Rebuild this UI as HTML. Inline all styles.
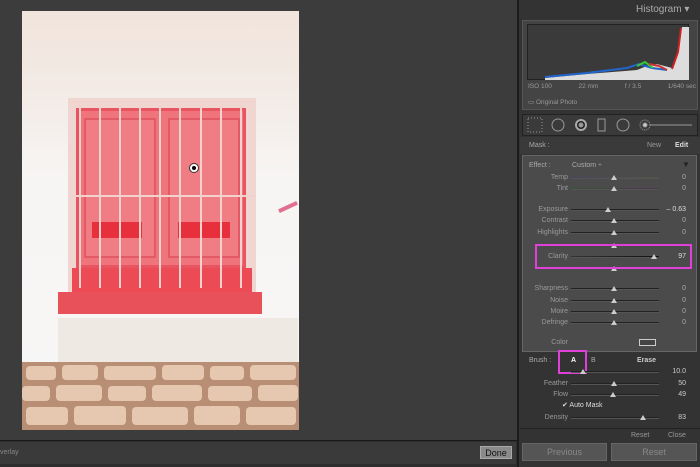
<!DOCTYPE html>
<html><head><style>
*{margin:0;padding:0;box-sizing:border-box}
body{width:700px;height:467px;background:#3d3d3d;position:relative;overflow:hidden;font-family:"Liberation Sans",sans-serif;font-size:7px;color:#aaa}
.a{position:absolute}
.lbl{position:absolute;right:132px;text-align:right;color:#999;font-size:7px}
.tr{position:absolute;left:571px;width:88px;height:2px;background:#222;border-bottom:1px solid #555}
.th{position:absolute;width:0;height:0;border-left:3px solid transparent;border-right:3px solid transparent;border-bottom:5px solid #ccc}
.v{position:absolute;right:14px;color:#aaa;font-size:7px}
</style></head><body>
<div class="a" style="left:0;top:0;width:518px;height:440px;background:#3c3c3c"></div>
<div class="a" style="left:22px;top:11px;width:277px;height:419px;background:linear-gradient(#f1e4dc 0,#f3ebe6 20%,#f7f5f4 40%,#f7f6f6 100%)"></div>
<div class="a" style="left:58px;top:318px;width:240px;height:45px;background:#efe9e3"></div>
<div class="a" style="left:68px;top:98px;width:188px;height:200px;background:#f0d6d0"></div>
<div class="a" style="left:76px;top:108px;width:170px;height:160px;background:#f0747c;border:3px solid #e85560"></div>
<div class="a" style="left:84px;top:118px;width:72px;height:140px;border:2px solid #e45a64;background:#f07d84"></div>
<div class="a" style="left:168px;top:118px;width:72px;height:140px;border:2px solid #e45a64;background:#f07d84"></div>
<div class="a" style="left:92px;top:222px;width:50px;height:16px;background:#e8303c"></div>
<div class="a" style="left:178px;top:222px;width:52px;height:16px;background:#e8303c"></div>
<div class="a" style="left:72px;top:268px;width:180px;height:24px;background:#ec4a55"></div>
<div class="a" style="left:58px;top:292px;width:204px;height:22px;background:#e8505a"></div>
<svg class="a" style="left:68px;top:98px" width="190" height="200">
<g stroke="#f2d2cc" stroke-width="2">
<line x1="12" y1="4" x2="12" y2="190"/><line x1="32" y1="4" x2="32" y2="190"/><line x1="52" y1="4" x2="52" y2="190"/><line x1="72" y1="4" x2="72" y2="190"/><line x1="92" y1="4" x2="92" y2="190"/><line x1="112" y1="4" x2="112" y2="190"/><line x1="133" y1="4" x2="133" y2="190"/><line x1="153" y1="4" x2="153" y2="190"/><line x1="173" y1="4" x2="173" y2="190"/>
<line x1="0" y1="4" x2="188" y2="4"/><line x1="0" y1="98" x2="188" y2="98"/>
</g></svg>
<div class="a" style="left:189px;top:163px;width:10px;height:10px;border-radius:50%;background:#fff;border:1px solid #333"><div style="margin:2px;width:4px;height:4px;border-radius:50%;background:#000"></div></div>
<div class="a" style="left:278px;top:205px;width:20px;height:4px;background:#e07090;transform:rotate(-25deg)"></div>
<div class="a" style="left:22px;top:362px;width:277px;height:68px;background:#b88f74"></div>
<svg class="a" style="left:22px;top:362px" width="277" height="68"><g fill="#e6c7b0">
<rect x="4" y="4" width="30" height="14" rx="4"/><rect x="40" y="3" width="36" height="15" rx="4"/><rect x="82" y="4" width="52" height="14" rx="4"/><rect x="140" y="3" width="42" height="15" rx="4"/><rect x="188" y="4" width="34" height="14" rx="4"/><rect x="228" y="3" width="46" height="15" rx="4"/>
<rect x="0" y="24" width="28" height="15" rx="4"/><rect x="34" y="23" width="46" height="16" rx="4"/><rect x="86" y="24" width="38" height="15" rx="4"/><rect x="130" y="23" width="50" height="16" rx="4"/><rect x="186" y="24" width="44" height="15" rx="4"/><rect x="236" y="23" width="40" height="16" rx="4"/>
<rect x="4" y="45" width="42" height="18" rx="4"/><rect x="52" y="44" width="52" height="19" rx="4"/><rect x="110" y="45" width="56" height="18" rx="4"/><rect x="172" y="44" width="46" height="19" rx="4"/><rect x="224" y="45" width="50" height="18" rx="4"/>
</g></svg>
<div class="a" style="left:0;top:440px;width:518px;height:27px;background:#2e2e2e;border-top:1px solid #1a1a1a"></div>
<div class="a" style="left:0;top:442px;width:516px;height:22px;background:#3a3a3a"></div>
<div class="a" style="left:0;top:449px;color:#888;font-size:7px">verlay</div>
<div class="a" style="left:480px;top:446px;width:32px;height:13px;background:#8a8a8a;color:#111;font-size:9px;text-align:center;line-height:13px;border:1px solid #aaa">Done</div>
<div class="a" style="left:517px;top:0;width:2px;height:467px;background:#1c1c1c"></div>
<div class="a" style="left:519px;top:0;width:181px;height:467px;background:#333"></div>
<div class="a" style="left:636px;top:4px;color:#aaa;font-size:10px">Histogram ▾</div>
<div class="a" style="left:522px;top:20px;width:176px;height:90px;background:#444;border:1px solid #555"></div>
<div class="a" style="left:527px;top:24px;width:162px;height:56px;background:#3a3a3a;border:1px solid #222"></div>
<svg class="a" style="left:527px;top:24px" width="162" height="56">
<path d="M18 54 L60 50 L110 46 L120 42 L130 40 L145 44 L152 25 L155 3 L162 3 L162 56 L18 56Z" fill="#ddd"/>
<path d="M18 53 L60 49 L100 44 L112 40 L125 44 L140 46" stroke="#2266cc" stroke-width="2" fill="none"/>
<path d="M110 42 L118 38 L126 44" stroke="#33cc33" stroke-width="2" fill="none"/>
<path d="M122 40 L132 42 L140 46" stroke="#cc3333" stroke-width="2" fill="none"/>
<path d="M145 45 L151 28 L154 4" stroke="#cc2222" stroke-width="2" fill="none"/>
</svg>
<div class="a" style="left:528px;top:83px;width:168px;color:#999;font-size:6.5px;display:flex;justify-content:space-between"><span>ISO 100</span><span>22 mm</span><span>f / 3.5</span><span>1/640 sec</span></div>
<div class="a" style="left:528px;top:98px;color:#999;font-size:6.5px">▭ Original Photo</div>
<div class="a" style="left:522px;top:114px;width:176px;height:22px;background:#3a3a3a;border:1px solid #222"></div>
<svg class="a" style="left:526px;top:116px" width="170" height="18" fill="none" stroke="#999">
<g stroke-dasharray="1 2"><rect x="2" y="2" width="14" height="14"/></g>
<circle cx="32" cy="9" r="6"/><circle cx="55" cy="9" r="5" fill="#222" stroke="#aaa" stroke-width="2"/><circle cx="55" cy="9" r="2" fill="#999"/>
<rect x="72" y="3" width="7" height="12"/><circle cx="97" cy="9" r="6"/>
<circle cx="119" cy="9" r="5" stroke-dasharray="1 1"/><circle cx="119" cy="9" r="2" fill="#ccc"/><line x1="124" y1="9" x2="166" y2="9"/>
</svg>
<div class="a" style="left:520px;top:137px;width:180px;height:17px;background:#3a3a3a"></div>
<div class="a" style="left:529px;top:142px;color:#aaa;font-size:7px">Mask :</div>
<div class="a" style="left:647px;top:142px;color:#999;font-size:7px">New</div>
<div class="a" style="left:675px;top:142px;color:#ddd;font-size:7px;font-weight:bold">Edit</div>
<div class="a" style="left:522px;top:155px;width:175px;height:197px;background:#4b4b4b;border:1px solid #666"></div>
<div class="a" style="left:529px;top:162px;color:#aaa;font-size:7px">Effect :</div>
<div class="a" style="left:572px;top:162px;color:#aaa;font-size:7px">Custom ÷</div>
<div class="a" style="left:682px;top:160px;color:#222;font-size:8px">▼</div>
<div class="lbl" style="top:174px">Temp</div><div class="tr" style="top:177px;background:linear-gradient(90deg,#446,#554)"></div><div class="th" style="left:611px;top:175px"></div><div class="v" style="top:174px">0</div>
<div class="lbl" style="top:185px">Tint</div><div class="tr" style="top:188px;background:linear-gradient(90deg,#353,#535)"></div><div class="th" style="left:611px;top:186px"></div><div class="v" style="top:185px">0</div>
<div class="lbl" style="top:206px">Exposure</div><div class="tr" style="top:209px"></div><div class="th" style="left:605px;top:207px"></div><div class="v" style="top:206px;color:#ddd">– 0.63</div>
<div class="lbl" style="top:217px">Contrast</div><div class="tr" style="top:220px"></div><div class="th" style="left:611px;top:218px"></div><div class="v" style="top:217px">0</div>
<div class="lbl" style="top:229px">Highlights</div><div class="tr" style="top:232px"></div><div class="th" style="left:611px;top:230px"></div><div class="v" style="top:229px">0</div>
<div class="th" style="left:611px;top:243px"></div>
<div class="lbl" style="top:253px">Clarity</div><div class="tr" style="top:256px;background:linear-gradient(90deg,#333,#111)"></div><div class="th" style="left:651px;top:254px"></div><div class="v" style="top:253px;color:#ddd">97</div>
<div class="th" style="left:611px;top:266px"></div>
<div class="a" style="left:535px;top:244px;width:157px;height:25px;border:2px solid #e040d8"></div>
<div class="lbl" style="top:285px">Sharpness</div><div class="tr" style="top:288px"></div><div class="th" style="left:611px;top:286px"></div><div class="v" style="top:285px">0</div>
<div class="lbl" style="top:297px">Noise</div><div class="tr" style="top:300px"></div><div class="th" style="left:611px;top:298px"></div><div class="v" style="top:297px">0</div>
<div class="lbl" style="top:308px">Moire</div><div class="tr" style="top:311px"></div><div class="th" style="left:611px;top:309px"></div><div class="v" style="top:308px">0</div>
<div class="lbl" style="top:319px">Defringe</div><div class="tr" style="top:322px"></div><div class="th" style="left:611px;top:320px"></div><div class="v" style="top:319px">0</div>
<div class="lbl" style="top:339px">Color</div>
<div class="a" style="left:639px;top:339px;width:17px;height:7px;border:1px solid #ccc;background:#444"></div>
<div class="a" style="left:529px;top:357px;color:#aaa;font-size:7px">Brush :</div>
<div class="a" style="left:571px;top:357px;color:#fff;font-size:7px;font-weight:bold">A</div>
<div class="a" style="left:591px;top:357px;color:#aaa;font-size:7px">B</div>
<div class="a" style="left:637px;top:357px;color:#ccc;font-size:7px;font-weight:bold">Erase</div>
<div class="a" style="left:558px;top:350px;width:29px;height:24px;border:2px solid #e040d8"></div>
<div class="tr" style="top:371px"></div><div class="th" style="left:580px;top:369px"></div><div class="v" style="top:368px;color:#ccc">10.0</div>
<div class="lbl" style="top:380px">Feather</div><div class="tr" style="top:383px"></div><div class="th" style="left:611px;top:381px"></div><div class="v" style="top:380px;color:#ccc">50</div>
<div class="lbl" style="top:391px">Flow</div><div class="tr" style="top:394px"></div><div class="th" style="left:610px;top:392px"></div><div class="v" style="top:391px;color:#ccc">49</div>
<div class="a" style="left:562px;top:401px;color:#ddd;font-size:7px">✔ Auto Mask</div>
<div class="lbl" style="top:414px">Density</div><div class="tr" style="top:417px"></div><div class="th" style="left:640px;top:415px"></div><div class="v" style="top:414px;color:#ccc">83</div>
<div class="a" style="left:520px;top:428px;width:180px;height:1px;background:#222"></div>
<div class="a" style="left:631px;top:432px;color:#999;font-size:7px">Reset</div>
<div class="a" style="left:668px;top:432px;color:#999;font-size:7px">Close</div>
<div class="a" style="left:522px;top:443px;width:85px;height:18px;background:#555;border:1px solid #666;color:#888;font-size:9px;text-align:center;line-height:16px">Previous</div>
<div class="a" style="left:611px;top:443px;width:86px;height:18px;background:#555;border:1px solid #666;color:#888;font-size:9px;text-align:center;line-height:16px">Reset</div>
</body></html>
